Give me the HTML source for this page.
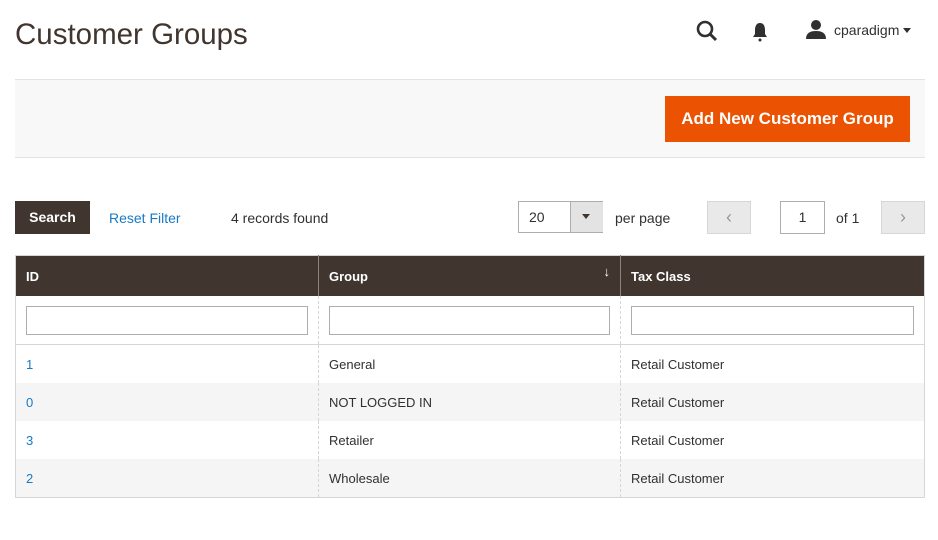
<!DOCTYPE html><html><head><style>
body{margin:0;width:938px;height:540px;background:#fff;font-family:"Liberation Sans",sans-serif;color:#303030;position:relative;overflow:hidden}
.a{position:absolute}
h1{position:absolute;left:15px;top:18px;margin:0;font-weight:normal;font-size:29.5px;color:#41362f}
.bar{left:15px;top:79px;width:910px;height:77px;background:#f8f8f8;border-top:1px solid #e3e3e3;border-bottom:1px solid #e3e3e3}
.btn{left:665px;top:96px;width:245px;height:46px;background:#eb5202;color:#fff;font-weight:bold;font-size:17px;line-height:46px;text-align:center}
table{position:absolute;left:15px;top:255px;width:910px;border-collapse:collapse;font-size:13px}
th{background:#41362f;color:#fff;text-align:left;height:40px;padding:0 10px;font-size:13px;border-left:1px solid #8a837f}
th:first-child{border-left:none}
td{height:38px;padding:0 10px;border-left:1px dashed #d6d6d6}
td:first-child{border-left:none}
tr.f td{background:#fff;height:48px;border-bottom:1px solid #d6d6d6}
tr.g td{background:#f5f5f5}
table{border:1px solid #d6d6d6}
.inp{width:100%;box-sizing:border-box;height:29px;border:1px solid #adadad}
</style></head><body>
<h1>Customer Groups</h1>
<svg class="a" style="left:696px;top:20px" width="22" height="22" viewBox="0 0 22 22"><circle cx="9" cy="9" r="7" fill="none" stroke="#303030" stroke-width="2.6"/><line x1="14" y1="14" x2="20" y2="20" stroke="#303030" stroke-width="3"/></svg>
<svg class="a" style="left:751px;top:22px" width="18" height="20" viewBox="0 0 18 20"><path d="M9 1C5 1 4 5 4 8v4l-2 3h14l-2-3V8c0-3-1-7-5-7z" fill="#303030"/><circle cx="9" cy="18" r="1.5" fill="#303030"/></svg>
<svg class="a" style="left:806px;top:19px" width="20" height="20" viewBox="0 0 20 20"><circle cx="10" cy="6" r="5" fill="#303030"/><path d="M0 20c0-6 4-8 10-8s10 2 10 8z" fill="#303030"/></svg>
<div class="a" style="left:834px;top:22px;font-size:14px">cparadigm</div>
<div class="a" style="left:903px;top:28px;border:4px solid transparent;border-top:5px solid #303030"></div>
<div class="a bar"></div>
<div class="a btn">Add New Customer Group</div>
<div class="a" style="left:15px;top:201px;width:75px;height:33px;background:#41362f;color:#fff;font-weight:bold;font-size:14px;line-height:33px;text-align:center">Search</div>
<div class="a" style="left:109px;top:210px;color:#1979c3;font-size:14px">Reset Filter</div>
<div class="a" style="left:231px;top:210px;font-size:14px">4 records found</div>
<div class="a" style="left:518px;top:201px;width:85px;height:32px;border:1px solid #adadad;box-sizing:border-box"><span class="a" style="left:10px;top:7px;font-size:14px">20</span><div class="a" style="left:51px;top:0;width:32px;height:30px;background:#e3e3e3;border-left:1px solid #adadad"></div><div class="a" style="left:63px;top:12px;border:4px solid transparent;border-top:5px solid #41362f"></div></div>
<div class="a" style="left:615px;top:210px;font-size:14px">per page</div>
<div class="a" style="left:707px;top:201px;width:44px;height:33px;background:#e9e9e9;border:1px solid #d6d6d6;box-sizing:border-box;text-align:center;line-height:30px;color:#999;font-size:18px">&#8249;</div>
<div class="a" style="left:780px;top:201px;width:45px;height:33px;border:1px solid #adadad;box-sizing:border-box;text-align:center;line-height:31px;font-size:14px">1</div>
<div class="a" style="left:836px;top:210px;font-size:14px">of 1</div>
<div class="a" style="left:881px;top:201px;width:44px;height:33px;background:#e9e9e9;border:1px solid #d6d6d6;box-sizing:border-box;text-align:center;line-height:30px;color:#999;font-size:18px">&#8250;</div>
<table>
<tr><th style="width:282px">ID</th><th style="width:281px;position:relative">Group<span style="position:absolute;right:10px;top:8px;font-weight:normal">&#8595;</span></th><th>Tax Class</th></tr>
<tr class="f"><td><input class="inp"></td><td><input class="inp"></td><td><input class="inp"></td></tr>
<tr><td style="color:#1979c3">1</td><td>General</td><td>Retail Customer</td></tr>
<tr class="g"><td style="color:#1979c3">0</td><td>NOT LOGGED IN</td><td>Retail Customer</td></tr>
<tr><td style="color:#1979c3">3</td><td>Retailer</td><td>Retail Customer</td></tr>
<tr class="g"><td style="color:#1979c3">2</td><td>Wholesale</td><td>Retail Customer</td></tr>
</table>
</body></html>
